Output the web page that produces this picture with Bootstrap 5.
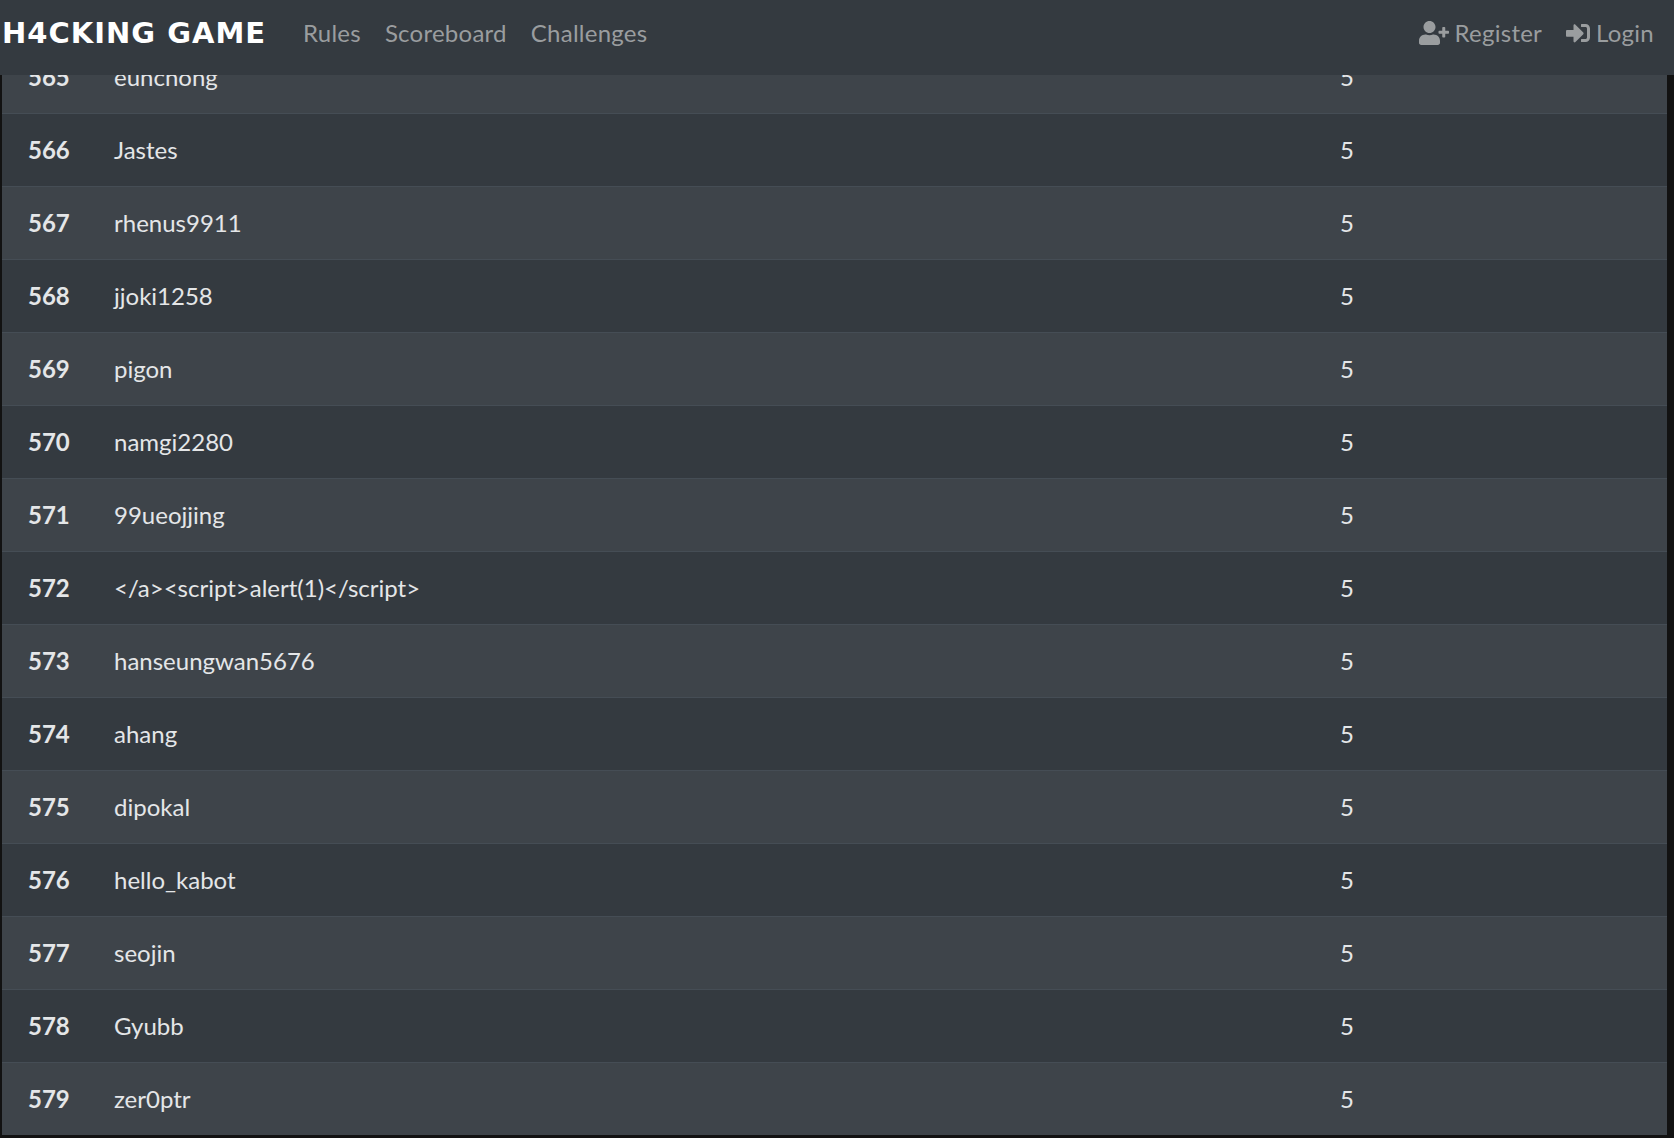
<!DOCTYPE html>
<html lang="en">
<head>
<meta charset="utf-8">
<title>H4CKING GAME</title>
<link href="https://cdn.jsdelivr.net/npm/bootstrap@5.3.0/dist/css/bootstrap.min.css" rel="stylesheet">
<style>
html, body { height: 100%; overflow: hidden; }
body { background: #121212; font-family: "Lato", sans-serif; font-size: 24px; line-height: 1.5; }
.top-bar { --bs-navbar-nav-link-padding-x: 12px; height: 75px; background: #343a40; padding: 0 8px 9px 2px; }
.top-bar .navbar-brand { font-family: "DejaVu Sans", sans-serif; font-weight: 700; font-size: 29px; letter-spacing: 1px; line-height: 1; color: #fff; padding: 0; margin-right: 25px; width: 264px; white-space: nowrap; }
.top-bar .nav-link { color: #9a9d9f; font-size: 24px; letter-spacing: .25px; line-height: 36px; padding-top: 0; padding-bottom: 0; display: flex; align-items: center; gap: 6px; }
.top-bar svg { height: 24px; fill: currentColor; display: block; }
.board-wrap { padding: 41px 7px 0 2px; }
.board { --bs-table-bg: #343a40; --bs-table-color: #e4e6e8; --bs-table-striped-bg: #3e444a; --bs-table-striped-color: #e4e6e8; --bs-table-border-color: #454d55; margin: 0; table-layout: fixed; border-color: #454d55; }
.board th, .board td { padding: 18px 0; font-size: 24px; line-height: 36px; border-bottom: 0; border-top: 1px solid #454d55; }
.board tr:first-child th, .board tr:first-child td { border-top: 0; }
.board th { width: 112px; padding-left: 26px; font-weight: 700; }
.board .col-score { width: 327px; }
</style>
</head>
<body>
<nav class="navbar navbar-expand fixed-top top-bar">
  <a class="navbar-brand" href="#">H4CKING GAME</a>
  <ul class="navbar-nav me-auto">
    <li class="nav-item"><a class="nav-link" href="#">Rules</a></li>
    <li class="nav-item"><a class="nav-link" href="#">Scoreboard</a></li>
    <li class="nav-item"><a class="nav-link" href="#">Challenges</a></li>
  </ul>
  <ul class="navbar-nav">
    <li class="nav-item"><a class="nav-link" href="#"><svg viewBox="0 0 640 512" aria-hidden="true"><path d="M624 208h-64v-64c0-8.8-7.2-16-16-16h-32c-8.8 0-16 7.2-16 16v64h-64c-8.8 0-16 7.2-16 16v32c0 8.8 7.2 16 16 16h64v64c0 8.8 7.2 16 16 16h32c8.8 0 16-7.2 16-16v-64h64c8.8 0 16-7.2 16-16v-32c0-8.8-7.2-16-16-16zm-400 48c70.7 0 128-57.3 128-128S294.7 0 224 0 96 57.3 96 128s57.3 128 128 128zm89.6 32h-16.7c-22.2 10.2-46.9 16-72.9 16s-50.6-5.8-72.9-16h-16.7C60.2 288 0 348.2 0 422.4V464c0 26.5 21.5 48 48 48h352c26.5 0 48-21.5 48-48v-41.6c0-74.2-60.2-134.4-134.4-134.4z"/></svg>Register</a></li>
    <li class="nav-item"><a class="nav-link" href="#"><svg viewBox="0 0 512 512" aria-hidden="true"><path d="M416 448h-84c-6.6 0-12-5.4-12-12v-40c0-6.6 5.4-12 12-12h84c17.7 0 32-14.3 32-32V160c0-17.7-14.3-32-32-32h-84c-6.6 0-12-5.4-12-12V76c0-6.6 5.4-12 12-12h84c53 0 96 43 96 96v192c0 53-43 96-96 96zm-47-201L201 79c-15-15-41-4.5-41 17v96H24c-13.3 0-24 10.7-24 24v96c0 13.3 10.7 24 24 24h136v96c0 21.5 26 32 41 17l168-168c9.3-9.4 9.3-24.6 0-34z"/></svg>Login</a></li>
  </ul>
</nav>
<main class="board-wrap">
  <table class="table table-striped board">
    <tbody>
      <tr><th scope="row">565</th><td>eunchong</td><td class="col-score">5</td></tr>
      <tr><th scope="row">566</th><td>Jastes</td><td class="col-score">5</td></tr>
      <tr><th scope="row">567</th><td>rhenus9911</td><td class="col-score">5</td></tr>
      <tr><th scope="row">568</th><td>jjoki1258</td><td class="col-score">5</td></tr>
      <tr><th scope="row">569</th><td>pigon</td><td class="col-score">5</td></tr>
      <tr><th scope="row">570</th><td>namgi2280</td><td class="col-score">5</td></tr>
      <tr><th scope="row">571</th><td>99ueojjing</td><td class="col-score">5</td></tr>
      <tr><th scope="row">572</th><td>&lt;/a&gt;&lt;script&gt;alert(1)&lt;/script&gt;</td><td class="col-score">5</td></tr>
      <tr><th scope="row">573</th><td>hanseungwan5676</td><td class="col-score">5</td></tr>
      <tr><th scope="row">574</th><td>ahang</td><td class="col-score">5</td></tr>
      <tr><th scope="row">575</th><td>dipokal</td><td class="col-score">5</td></tr>
      <tr><th scope="row">576</th><td>hello_kabot</td><td class="col-score">5</td></tr>
      <tr><th scope="row">577</th><td>seojin</td><td class="col-score">5</td></tr>
      <tr><th scope="row">578</th><td>Gyubb</td><td class="col-score">5</td></tr>
      <tr><th scope="row">579</th><td>zer0ptr</td><td class="col-score">5</td></tr>
    </tbody>
  </table>
</main>
<script src="https://cdn.jsdelivr.net/npm/bootstrap@5.3.0/dist/js/bootstrap.bundle.min.js"></script>
</body>
</html>
